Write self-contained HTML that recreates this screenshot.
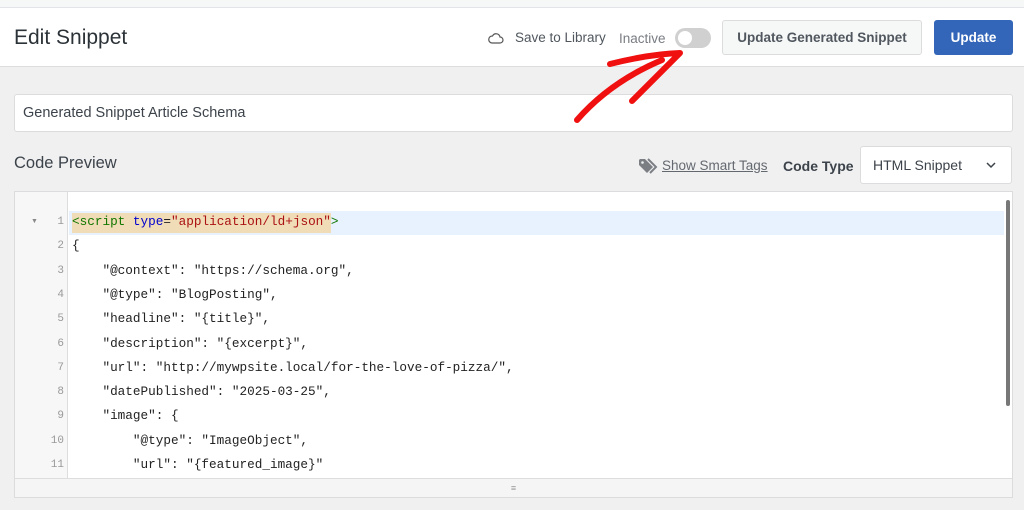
<!DOCTYPE html>
<html><head><meta charset="utf-8"><style>
*{box-sizing:border-box;margin:0;padding:0}
body{width:1024px;height:510px;background:#f0f0f1;font-family:"Liberation Sans",sans-serif;position:relative;overflow:hidden;color:#3c434a}
.top{position:absolute;left:0;top:0;width:1024px;height:8px;background:#f6f7f7;border-bottom:1px solid #e2e4e7}
.hdr{position:absolute;left:0;top:8px;width:1024px;height:59px;background:#fff;border-bottom:1px solid #dcdcde}
.abs{position:absolute;white-space:nowrap}
.mono{font-family:"Liberation Mono",monospace;font-size:12.7px;color:#222;white-space:pre}
.ln{position:absolute;width:40px;text-align:right;font-family:"Liberation Mono",monospace;font-size:11px;color:#999}
</style></head><body>
<div class="top"></div>
<div class="hdr"></div>
<div class="abs" style="left:14px;top:26px;font-size:21px;color:#2c3338">Edit Snippet</div>
<svg class="abs" style="left:488px;top:32px" width="16" height="12" viewBox="0 0 16 12"><path d="M4 11h8a3 3 0 0 0 0-6 4 4 0 0 0-7.5-1A3.5 3.5 0 0 0 4 11z" fill="none" stroke="#555" stroke-width="1.2"/></svg>
<div class="abs" style="left:515px;top:30px;font-size:13.5px;color:#50575e">Save to Library</div>
<div class="abs" style="left:619px;top:31px;font-size:13.5px;color:#787c82">Inactive</div>
<div class="abs" style="left:675px;top:28px;width:36px;height:20px;border-radius:10px;background:#d0d0d0"></div>
<div class="abs" style="left:678px;top:31px;width:14px;height:14px;border-radius:50%;background:#fff"></div>
<div class="abs" style="left:722px;top:20px;width:200px;height:35px;border:1px solid #dcdcde;background:#f6f7f7;border-radius:3px;font-size:13.5px;font-weight:bold;color:#50575e;text-align:center;line-height:33px">Update Generated Snippet</div>
<div class="abs" style="left:934px;top:20px;width:79px;height:35px;background:#3366b9;border-radius:3px;font-size:13.5px;font-weight:bold;color:#fff;text-align:center;line-height:35px">Update</div>
<div class="abs" style="left:14px;top:94px;width:999px;height:38px;background:#fff;border:1px solid #dcdcde;border-radius:3px;font-size:14.5px;color:#3c434a;padding-left:8px;line-height:36px">Generated Snippet Article Schema</div>
<div class="abs" style="left:14px;top:154px;font-size:16.5px;color:#3c434a">Code Preview</div>
<svg class="abs" style="left:638px;top:158px" width="22" height="16" viewBox="0 0 22 16"><path d="M1 2v5l8 8 6-6-8-8H2z" fill="#7b7f84"/><circle cx="4.5" cy="4.5" r="1.3" fill="#f0f0f1"/><path d="M10 1l8 8-6 6" fill="none" stroke="#7b7f84" stroke-width="2"/></svg>
<div class="abs" style="left:662px;top:158px;font-size:13.5px;color:#646970;text-decoration:underline">Show Smart Tags</div>
<div class="abs" style="left:783px;top:158px;font-size:14px;font-weight:bold;color:#3c434a">Code Type</div>
<div class="abs" style="left:860px;top:146px;width:152px;height:38px;background:#fff;border:1px solid #dcdcde;border-radius:3px;font-size:14px;color:#3c434a;padding-left:12px;line-height:36px">HTML Snippet</div>
<svg class="abs" style="left:985px;top:161px" width="12" height="8" viewBox="0 0 12 8"><path d="M2 2l4 4 4-4" fill="none" stroke="#3c434a" stroke-width="1.5"/></svg>
<div class="abs" style="left:14px;top:191px;width:999px;height:307px;background:#fff;border:1px solid #dcdcde"></div>
<div class="abs" style="left:15px;top:192px;width:53px;height:286px;background:#f7f7f7;border-right:1px solid #ddd"></div>
<div class="abs" style="left:15px;top:478px;width:997px;height:19px;background:#f5f5f5;border-top:1px solid #ddd;text-align:center;font-size:9px;color:#999;line-height:18px">≡</div>
<div class="abs" style="left:69px;top:211px;width:935px;height:24px;background:#e8f2fe"></div>
<div class="abs" style="left:72px;top:213px;width:259px;height:20px;background:#f1dcb8"></div>
<div class="abs" style="left:1006px;top:200px;width:4px;height:206px;background:#777;border-radius:2px"></div>
<div class="abs" style="left:31px;top:218px;font-size:7px;color:#888">▼</div>
<div class="ln" style="left:24px;top:216px">1</div><div class="ln" style="left:24px;top:240px">2</div><div class="ln" style="left:24px;top:265px">3</div><div class="ln" style="left:24px;top:289px">4</div><div class="ln" style="left:24px;top:313px">5</div><div class="ln" style="left:24px;top:338px">6</div><div class="ln" style="left:24px;top:362px">7</div><div class="ln" style="left:24px;top:386px">8</div><div class="ln" style="left:24px;top:410px">9</div><div class="ln" style="left:24px;top:435px">10</div><div class="ln" style="left:24px;top:459px">11</div>
<div class="abs mono" style="left:72px;top:214px"><span style="color:#170">&lt;script</span> <span style="color:#00c">type</span>=<span style="color:#a11">"application/ld+json"</span><span style="color:#170">&gt;</span></div>
<div class="abs mono" style="left:72px;top:238px">{</div>
<div class="abs mono" style="left:72px;top:263px">    "@context": "https://schema.org",</div>
<div class="abs mono" style="left:72px;top:287px">    "@type": "BlogPosting",</div>
<div class="abs mono" style="left:72px;top:311px">    "headline": "{title}",</div>
<div class="abs mono" style="left:72px;top:336px">    "description": "{excerpt}",</div>
<div class="abs mono" style="left:72px;top:360px">    "url": "http://mywpsite.local/for-the-love-of-pizza/",</div>
<div class="abs mono" style="left:72px;top:384px">    "datePublished": "2025-03-25",</div>
<div class="abs mono" style="left:72px;top:408px">    "image": {</div>
<div class="abs mono" style="left:72px;top:433px">        "@type": "ImageObject",</div>
<div class="abs mono" style="left:72px;top:457px">        "url": "{featured_image}"</div>
<svg class="abs" style="left:560px;top:40px;z-index:5" width="140" height="90" viewBox="0 0 140 90"><path d="M17 80Q50 42 102 20M50 24Q90 14 120 13L72 61" fill="none" stroke="#f01010" stroke-width="6" stroke-linecap="round" stroke-linejoin="round"/></svg>
</body></html>
